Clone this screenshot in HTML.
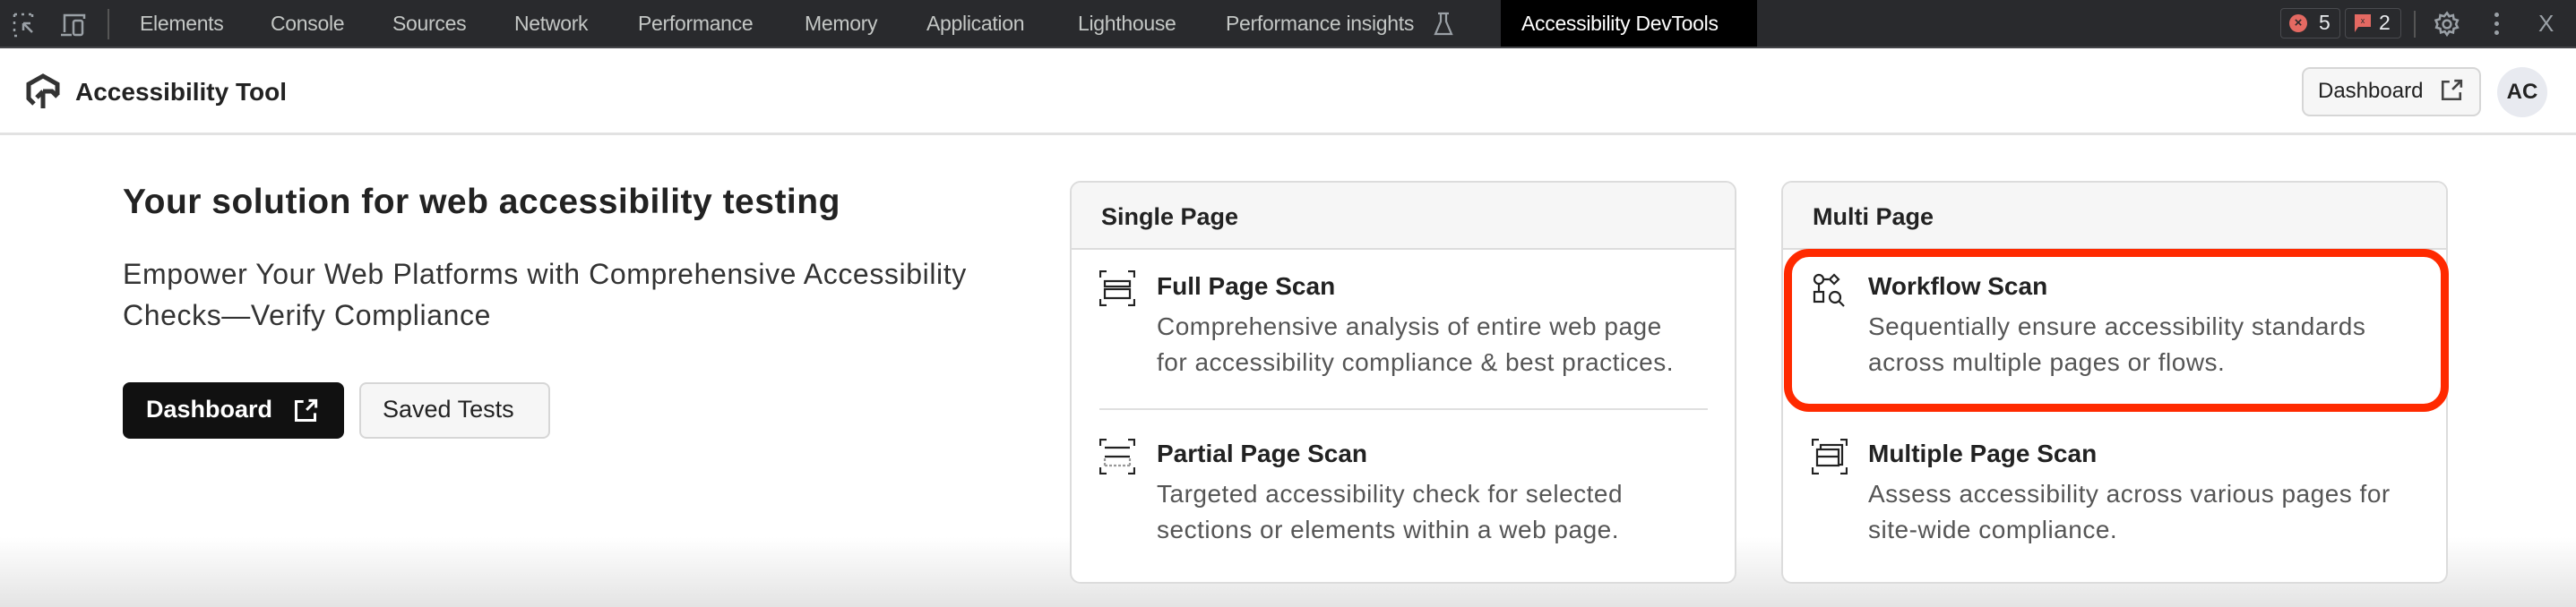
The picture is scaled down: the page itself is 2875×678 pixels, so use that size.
<!DOCTYPE html>
<html><head><meta charset="utf-8"><style>
*{margin:0;padding:0;box-sizing:border-box}
body{width:2875px;height:678px;overflow:hidden;background:#fff;font-family:"Liberation Sans",Arial,sans-serif;position:relative}
.a{position:absolute;white-space:nowrap;z-index:2}
.top{position:absolute;left:0;top:0;width:2875px;height:54px;background:#292a2d;border-bottom:2px solid #45464a;z-index:2}
.tab{position:absolute;top:13px;font-size:23px;color:#c4c7c5;letter-spacing:-0.3px}
.hdr{position:absolute;left:0;top:148px;width:2875px;height:3px;background:#e2e2e2}
.card{position:absolute;top:202px;height:450px;border:2px solid #dcdcdc;border-radius:12px;background:#fff;overflow:hidden;z-index:1}
.ch{height:75px;background:#f6f6f6;border-bottom:2px solid #dcdcdc;font-size:27px;font-weight:bold;color:#222;padding:23px 0 0 33px}
.t{position:absolute;font-size:28px;font-weight:bold;color:#222;white-space:nowrap;z-index:2}
.d{position:absolute;font-size:28px;letter-spacing:0.5px;color:#555;line-height:40px;white-space:nowrap;z-index:2}
</style></head><body>
<div class="top">
<svg class="a" style="left:14px;top:14px" width="28" height="28" viewBox="0 0 28 28" fill="none" stroke="#9aa0a6" stroke-width="2.5"><path d="M2 2h4M10 2h4M18 2h4M2 2v4M2 10v4M2 18v4M2 26h4M22 2v4" stroke-dasharray="3 3"/><path d="M12 12l10 10M12 12h8M12 12v8"/></svg>
<svg class="a" style="left:66px;top:14px" width="34" height="28" viewBox="0 0 34 28" fill="none" stroke="#9aa0a6" stroke-width="2.5"><path d="M6 22V3h22v4"/><path d="M2 25h12"/><rect x="16" y="9" width="10" height="16" rx="2"/></svg>
<div class="a" style="left:120px;top:10px;width:2px;height:34px;background:#555"></div>
<div class="tab" style="left:156px">Elements</div>
<div class="tab" style="left:302px">Console</div>
<div class="tab" style="left:438px">Sources</div>
<div class="tab" style="left:574px">Network</div>
<div class="tab" style="left:712px">Performance</div>
<div class="tab" style="left:898px">Memory</div>
<div class="tab" style="left:1034px">Application</div>
<div class="tab" style="left:1203px">Lighthouse</div>
<div class="tab" style="left:1368px">Performance insights</div>
<svg class="a" style="left:1600px;top:13px" width="22" height="28" viewBox="0 0 22 28" fill="none" stroke="#9aa0a6" stroke-width="2.2"><path d="M5 2h12M8 2v9L2 25h18L14 11V2"/></svg>
<div class="a" style="left:1675px;top:0;width:286px;height:52px;background:#000"></div>
<div class="tab" style="left:1698px;color:#fff;z-index:3">Accessibility DevTools</div>
<div class="a" style="left:2545px;top:9px;width:67px;height:34px;border:1.5px solid #4a4b4f;border-radius:4px"></div>
<div class="a" style="left:2555px;top:16px;width:20px;height:20px;border-radius:50%;background:#e46962;color:#292a2d;font-size:15px;font-weight:bold;text-align:center;line-height:20px">×</div>
<div class="a" style="left:2588px;top:12px;color:#e8eaed;font-size:23px">5</div>
<div class="a" style="left:2617px;top:9px;width:63px;height:34px;border:1.5px solid #4a4b4f;border-radius:4px"></div>
<svg class="a" style="left:2627px;top:15px" width="20" height="24" viewBox="0 0 20 24"><path d="M1 1h18v14H5l-4 6z" fill="#e46962"/><text x="10" y="11" font-size="9" fill="#292a2d" text-anchor="middle" font-family="Liberation Sans">x</text></svg>
<div class="a" style="left:2655px;top:12px;color:#e8eaed;font-size:23px">2</div>
<div class="a" style="left:2694px;top:12px;width:2px;height:30px;background:#555"></div>
<svg class="a" style="left:2716px;top:12px" width="30" height="30" viewBox="0 0 24 24" fill="none" stroke="#9aa0a6" stroke-width="2"><circle cx="12" cy="12" r="3.5"/><path d="M12 2l2 3 3.5-1 .5 3.5 3.5 1-1.5 3.5 1.5 3-3.5 1-.5 3.5-3.5-1-2 3-2-3-3.5 1-.5-3.5-3.5-1L3.5 12 2 8.5l3.5-1L6 4l3.5 1z"/></svg>
<div class="a" style="left:2784px;top:14px;width:5px;height:5px;border-radius:50%;background:#9aa0a6;box-shadow:0 10px #9aa0a6,0 20px #9aa0a6"></div>
<div class="a" style="left:2833px;top:11px;color:#9aa0a6;font-size:26px">X</div>
</div>

<svg class="a" style="left:28px;top:82px" width="40" height="42" viewBox="0 0 40 42" fill="none" stroke="#333" stroke-width="5" stroke-linejoin="miter"><path d="M10 34L4 28V12L20 3l16 9v12"/><path d="M20 39V20M20 20l-7 7M20 20h10l6 6"/></svg>
<div class="a" style="left:84px;top:87px;font-size:28px;font-weight:bold;color:#222">Accessibility Tool</div>
<div class="a" style="left:2569px;top:75px;width:200px;height:55px;border:2px solid #d6d6d6;border-radius:9px;background:#f6f6f6"></div>
<div class="a" style="left:2587px;top:88px;font-size:24px;color:#222">Dashboard</div>
<svg class="a" style="left:2723px;top:88px" width="26" height="26" viewBox="0 0 24 24" fill="none" stroke="#444" stroke-width="2.4"><path d="M10 3H3v18h18v-7"/><path d="M13 11l9-9M15 2h7v7"/></svg>
<div class="a" style="left:2787px;top:75px;width:56px;height:56px;border-radius:50%;background:#e8eaf0;font-size:24px;font-weight:bold;color:#222;text-align:center;line-height:56px">AC</div>
<div class="hdr"></div>

<div class="a" style="left:137px;top:204px;font-size:39px;letter-spacing:0.5px;font-weight:bold;color:#222">Your solution for web accessibility testing</div>
<div class="a" style="left:137px;top:283px;font-size:32px;letter-spacing:0.6px;color:#333;line-height:46px">Empower Your Web Platforms with Comprehensive Accessibility<br>Checks—Verify Compliance</div>
<div class="a" style="left:137px;top:427px;width:247px;height:63px;border-radius:8px;background:#111"></div>
<div class="a" style="left:163px;top:442px;font-size:27px;color:#fff;font-weight:bold">Dashboard</div>
<svg class="a" style="left:327px;top:445px" width="28" height="28" viewBox="0 0 24 24" fill="none" stroke="#fff" stroke-width="2.6"><path d="M10 3H3v18h18v-7"/><path d="M13 11l9-9M15 2h7v7"/></svg>
<div class="a" style="left:401px;top:427px;width:213px;height:63px;border-radius:8px;background:#f6f6f6;border:2px solid #d6d6d6"></div>
<div class="a" style="left:427px;top:442px;font-size:27px;color:#222">Saved Tests</div>

<div class="card" style="left:1194px;width:744px"><div class="ch">Single Page</div></div>
<svg class="a" style="left:1227px;top:302px" width="40" height="40" viewBox="0 0 40 40" fill="none" stroke="#222" stroke-width="2.2"><path d="M1 8V1h7M32 1h7v7M1 32v7h7M39 32v7h-7"/><rect x="6" y="12" width="28" height="6"/><rect x="6" y="21" width="28" height="10"/></svg>
<div class="t" style="left:1291px;top:304px">Full Page Scan</div>
<div class="d" style="left:1291px;top:345px">Comprehensive analysis of entire web page<br>for accessibility compliance &amp; best practices.</div>
<div class="a" style="left:1227px;top:456px;width:679px;height:2px;background:#e0e0e0"></div>
<svg class="a" style="left:1227px;top:490px" width="40" height="40" viewBox="0 0 40 40" fill="none" stroke="#222" stroke-width="2.2"><path d="M1 8V1h7M32 1h7v7M1 32v7h7M39 32v7h-7"/><path d="M6 10h28M6 20h28"/><path d="M6 30h28M6 22v8M34 22v8" stroke="#999" stroke-dasharray="3 2"/></svg>
<div class="t" style="left:1291px;top:491px">Partial Page Scan</div>
<div class="d" style="left:1291px;top:532px">Targeted accessibility check for selected<br>sections or elements within a web page.</div>

<div class="card" style="left:1988px;width:744px"><div class="ch">Multi Page</div></div>
<div class="a" style="left:1991px;top:278px;width:742px;height:182px;border:9px solid #ff2a00;border-radius:28px"></div>
<svg class="a" style="left:2023px;top:305px" width="38" height="40" viewBox="0 0 38 40" fill="none" stroke="#222" stroke-width="2.2"><circle cx="7" cy="7" r="5"/><path d="M12 7h6M7 12v8"/><path d="M24 2l5 5-5 5-5-5z"/><rect x="2" y="21" width="10" height="11"/><circle cx="25" cy="27" r="6"/><path d="M29 31l6 6"/></svg>
<div class="t" style="left:2085px;top:304px">Workflow Scan</div>
<div class="d" style="left:2085px;top:345px">Sequentially ensure accessibility standards<br>across multiple pages or flows.</div>
<svg class="a" style="left:2022px;top:490px" width="40" height="40" viewBox="0 0 40 40" fill="none" stroke="#222" stroke-width="2.2"><path d="M1 8V1h7M32 1h7v7M1 32v7h7M39 32v7h-7"/><rect x="10" y="7" width="24" height="22"/><rect x="6" y="12" width="24" height="18" fill="#fff"/><path d="M6 20h24"/></svg>
<div class="t" style="left:2085px;top:491px">Multiple Page Scan</div>
<div class="d" style="left:2085px;top:532px">Assess accessibility across various pages for<br>site-wide compliance.</div>

<div style="position:absolute;left:0;top:600px;width:2875px;height:78px;background:linear-gradient(to bottom,rgba(232,232,232,0),rgba(228,228,228,1));z-index:0"></div>
</body></html>
